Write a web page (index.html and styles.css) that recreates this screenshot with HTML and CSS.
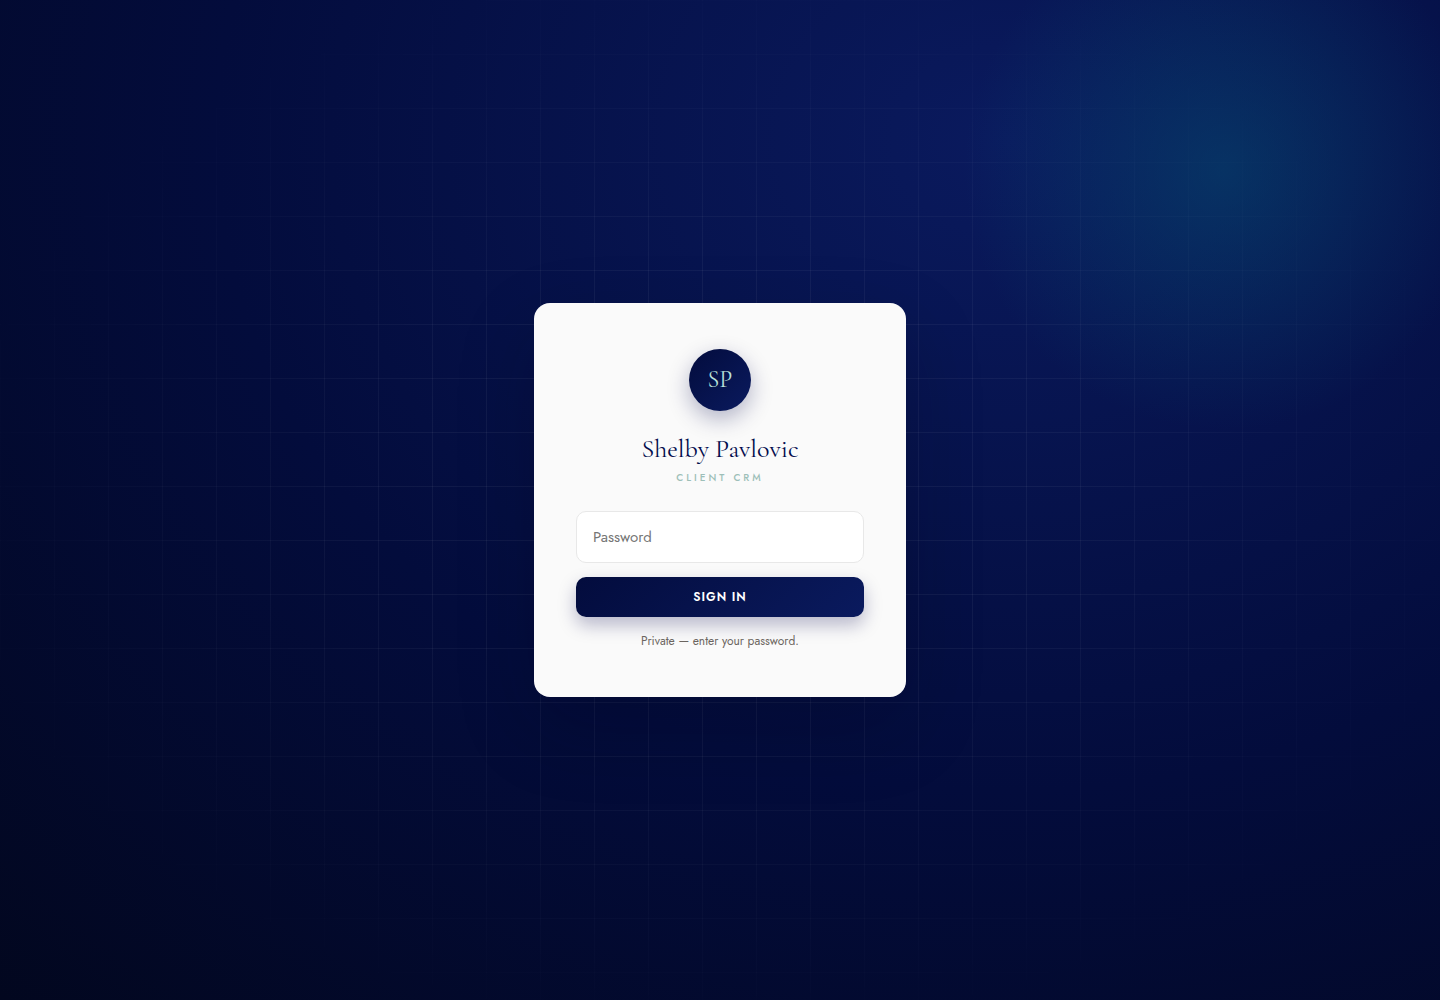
FILE: index.html
```html
<!DOCTYPE html>
<html lang="en">
<head>
	<meta charset="utf-8">
	<meta name="viewport" content="width=device-width, initial-scale=1">
	<title>Shelby Pavlovic</title>
	<link rel="stylesheet" href="styles.css">
</head>
<body>
	<main class="login">
		<form class="card" onsubmit="return false">
			<div class="mark">SP</div>
			<h1>Shelby Pavlovic</h1>
			<p class="sub">Client CRM</p>
			<input type="password" id="password" placeholder="Password" aria-label="Password">
			<button type="submit">Sign In</button>
			<p class="note">Private — enter your password.</p>
		</form>
	</main>
</body>
</html>
```

FILE: styles.css
```css
*{box-sizing: border-box;}
body{
	margin: 0;
	font-family: Jost, Lato, sans-serif;
	background-color: #030c3d;
}
.login{
	position: relative;
	display: flex;
	align-items: center;
	justify-content: center;
	min-height: 100vh;
	padding: 24px;
	overflow: hidden;
	background:
		radial-gradient(circle 260px at 85% 17%, rgba(6, 84, 118, .46), rgba(6, 84, 118, 0)),
		radial-gradient(110% 130% at 70% 14%, #0a1a5e 0%, #030c3c 50%, #020619 100%);
}
/* faint grid, fading out towards the edges */
.login::before{
	content: "";
	position: absolute;
	inset: 0;
	background-image:
		linear-gradient(rgba(255, 255, 255, .05) 1px, transparent 1px),
		linear-gradient(90deg, rgba(255, 255, 255, .05) 1px, transparent 1px);
	background-size: 54px 54px;
	-webkit-mask-image: radial-gradient(ellipse at center, #000 30%, transparent 80%);
	mask-image: radial-gradient(ellipse at center, #000 30%, transparent 80%);
}
.card{
	position: relative;
	display: flex;
	flex-direction: column;
	width: 100%;
	max-width: 372px;
	padding: 46px 42px;
	border-radius: 16px;
	background-color: #fafafa;
	text-align: center;
	box-shadow: 0 30px 80px rgba(0, 0, 20, .2);
}
.mark{
	display: flex;
	align-items: center;
	justify-content: center;
	align-self: center;
	width: 62px;
	height: 62px;
	margin-bottom: 20px;
	padding-bottom: 2px;
	border-radius: 50%;
	background: linear-gradient(135deg, #030c3d, #0a1a5e);
	color: #b9e0da;
	font: 24px "Cormorant Garamond", "Liberation Serif", serif;
	box-shadow: 0 8px 22px rgba(10, 12, 80, .3);
}
h1{
	margin: 0;
	color: #030c4d;
	font: 26px/36px "Cormorant Garamond", "Liberation Serif", serif;
}
.sub{
	margin: 4px 0 26px;
	color: #9dbfb8;
	font-size: 10px;
	font-weight: 500;
	line-height: 14px;
	letter-spacing: 3px;
	text-transform: uppercase;
}
input{
	width: 100%;
	height: 52px;
	margin-bottom: 14px;
	padding: 0 16px;
	border: 1px solid #e8e8e8;
	border-radius: 10px;
	background-color: #fff;
	font-family: inherit;
	font-size: 15px;
}
input::placeholder{color: #757575;}
button{
	height: 40px;
	border: 0;
	border-radius: 10px;
	background: linear-gradient(135deg, #030c3d, #0a1a5e);
	color: #fff;
	font-family: inherit;
	font-size: 12px;
	font-weight: 600;
	letter-spacing: 1px;
	text-transform: uppercase;
	cursor: pointer;
	box-shadow: 0 8px 18px rgba(10, 12, 80, .28);
}
.note{
	margin: 15px 0 1px;
	color: #6b6560;
	font-size: 12px;
	line-height: 18px;
}
```
